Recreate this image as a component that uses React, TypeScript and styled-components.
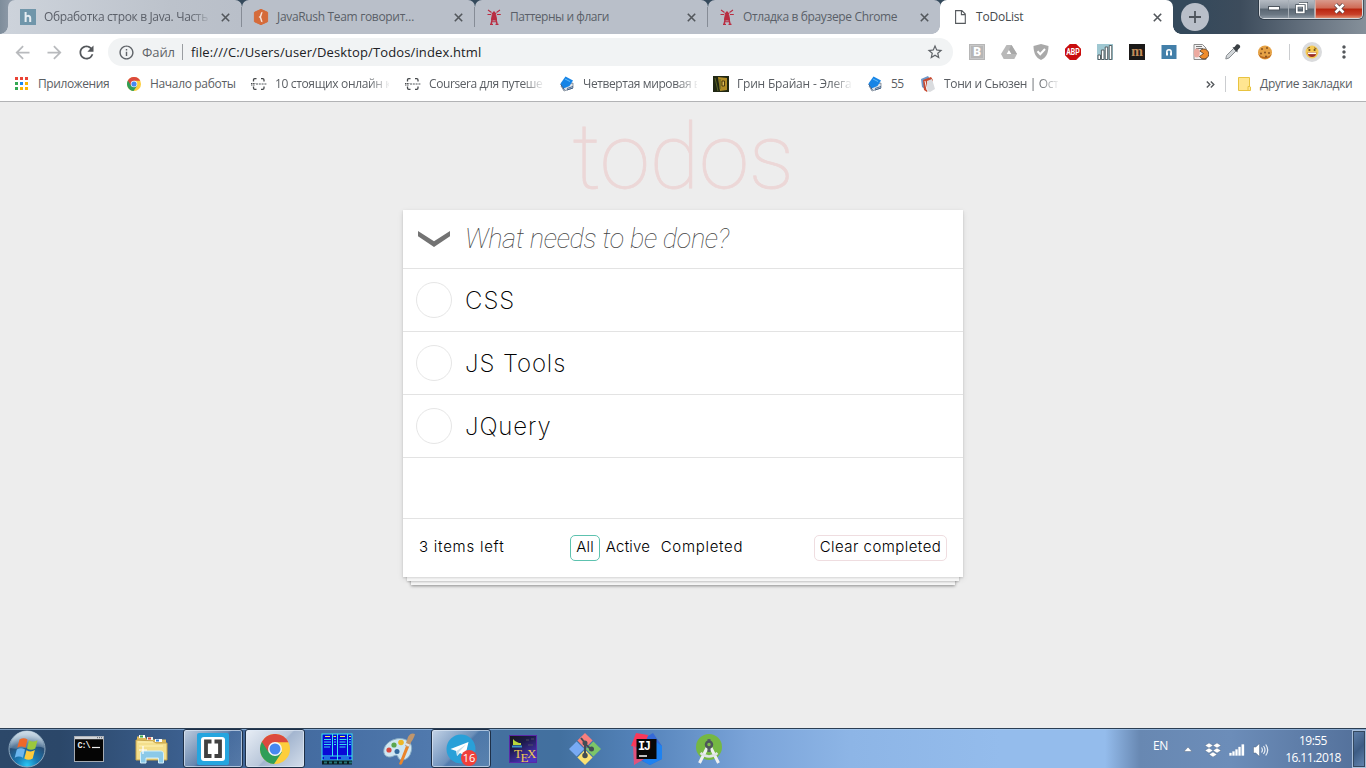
import React from 'react';
import styled, { createGlobalStyle } from 'styled-components';
import { MdArrowBack, MdArrowForward, MdRefresh, MdInfoOutline, MdStarBorder, MdMoreVert } from 'react-icons/md';

const GlobalStyle = createGlobalStyle`
  * { box-sizing: border-box; }
  body { margin: 0; overflow: hidden; font-family: 'Open Sans', 'Noto Sans', sans-serif; }
  svg { display: block; flex: none; }
`;

const Screen = styled.div`
  width: 1366px;
  height: 768px;
  display: flex;
  flex-direction: column;
  background: #ededed;
`;

/* ---------- Tab strip ---------- */

const TitleBar = styled.header`
  height: 34px;
  flex: none;
  display: flex;
  align-items: flex-start;
  padding-left: 8px;
  background: linear-gradient(90deg, #7e8d9b 0, #8e9aa8 10px, #34495b 240px, #34495b 1190px, #3d4c5c 1240px, #6c7885 1320px, #85909a 100%);
`;

const Tab = styled.div<{ $active?: boolean; $first?: boolean }>`
  position: relative;
  width: ${p => (p.$first ? 234 : 233)}px;
  height: 34px;
  display: flex;
  align-items: center;
  padding-left: ${p => (p.$first ? 12 : 11)}px;
  border-radius: 7px 7px 0 0;
  background: ${p => (p.$active ? '#fff' : p.$first ? 'linear-gradient(90deg, #cdd3db, #bcc2cb 70%, #b9bfc9)' : '#b9bfc9')};
  ${p => p.$active && 'margin-left: -1px; padding-left: 12px; z-index: 1;'}
  ${p => (p.$active || p.$first) && `
    &::before {
      content: '';
      position: absolute;
      left: -8px;
      bottom: 0;
      width: 8px;
      height: 8px;
      background: radial-gradient(circle at 0 0, transparent 7.5px, ${p.$active ? '#fff' : '#cdd3db'} 8px);
    }
  `}
  ${p => p.$active && `
    &::after {
      content: '';
      position: absolute;
      right: -8px;
      bottom: 0;
      width: 8px;
      height: 8px;
      background: radial-gradient(circle at 100% 0, transparent 7.5px, #fff 8px);
    }
  `}
`;

const TabTitle = styled.span<{ $ls?: number; $fade?: boolean; $active?: boolean }>`
  width: 177px;
  padding-left: 8px;
  margin-right: 0;
  flex: none;
  overflow: hidden;
  white-space: nowrap;
  font-size: 12px;
  line-height: 18px;
  letter-spacing: ${p => p.$ls ?? -0.2}px;
  color: ${p => (p.$active ? '#45494d' : '#5a5f68')};
  ${p => p.$fade && 'mask-image: linear-gradient(90deg, #000 154px, transparent 176px);'}
`;

const IconSlot = styled.span`
  width: 16px;
  display: grid;
  place-items: center;
`;

const CloseSlot = styled.span`
  margin-left: 8px;
`;

const TabDivider = styled.i`
  position: absolute;
  right: 0;
  top: 7px;
  width: 1px;
  height: 20px;
  background: #868c96;
`;

const NewTab = styled.div`
  width: 28px;
  height: 28px;
  margin: 3px 0 0 8px;
  border-radius: 50%;
  background: #b9bfc9;
  display: grid;
  place-items: center;
`;

const WindowButtons = styled.div`
  display: flex;
  margin-left: auto;
  margin-right: 3px;
  height: 19px;
  border: 1px solid #d5d9de;
  border-top: 0;
  border-radius: 0 0 5px 5px;
  overflow: hidden;
  box-shadow: 0 0 0 1px rgba(30, 40, 50, 0.6);
`;

const WindowButton = styled.div<{ $w: number; $close?: boolean }>`
  width: ${p => p.$w}px;
  display: grid;
  place-items: center;
  padding-bottom: 2px;
  border-left: ${p => (p.$close ? '1px solid #d9a79c' : '0')};
  border-right: ${p => (p.$close ? '0' : '1px solid #a5adb5')};
  background: ${p =>
    p.$close
      ? 'linear-gradient(#d99a8c, #cf6a55 45%, #b8250f 50%, #c8402a 80%, #e08e70)'
      : 'linear-gradient(#b5bbc3, #8f98a2 45%, #5a6672 50%, #6b7783 80%, #8c97a2)'};
`;

/* ---------- Toolbar ---------- */

const Toolbar = styled.div`
  height: 36px;
  flex: none;
  display: flex;
  align-items: center;
  background: #fff;
  padding-left: 6px;
`;

const NavButton = styled.div<{ $muted?: boolean }>`
  width: 32px;
  display: grid;
  place-items: center;
  color: ${p => (p.$muted ? '#b8babd' : '#54575b')};
`;

const MenuButton = styled.div`
  width: 20px;
  margin-left: 12px;
  color: #54575b;
`;

const Omnibox = styled.div`
  width: 845px;
  height: 28px;
  margin-left: 6px;
  border-radius: 14px;
  background: #f1f3f4;
  display: flex;
  align-items: center;
  padding: 0 9px 0 10px;
  color: #5f6368;
`;

const Scheme = styled.span`
  margin-left: 7px;
  width: 40px;
  font-size: 13px;
  letter-spacing: -0.1px;
`;

const Url = styled.span`
  flex: 1;
  padding-left: 8px;
  border-left: 1px solid #9a9da1;
  font-size: 13px;
  line-height: 16px;
  letter-spacing: 0.13px;
  color: #202124;
  white-space: nowrap;
`;

const Extensions = styled.div`
  display: flex;
  margin-left: 8px;
`;

const ExtensionSlot = styled.div`
  width: 32px;
  height: 28px;
  display: grid;
  place-items: center;
`;

const Separator = styled.i<{ $h: number; $ml?: number; $mr?: number }>`
  width: 1px;
  height: ${p => p.$h}px;
  margin-left: ${p => p.$ml ?? 0}px;
  margin-right: ${p => p.$mr ?? 0}px;
  background: #cbcdd0;
`;

const Avatar = styled.div`
  width: 20px;
  height: 20px;
  border-radius: 50%;
  background: #dadbdd;
  display: grid;
  place-items: center;
`;

/* ---------- Bookmarks ---------- */

const BookmarkBar = styled.nav`
  height: 32px;
  flex: none;
  display: flex;
  align-items: center;
  padding: 0 14px 3px 14px;
  background: #fff;
  border-bottom: 1px solid #b2b3b5;
  color: #5a5e63;
`;

const Bookmark = styled.div<{ $w: number }>`
  width: ${p => p.$w}px;
  flex: none;
  display: flex;
  align-items: center;
  gap: 8px;
`;

const BookmarkText = styled.span<{ $ls?: number; $fade?: boolean }>`
  max-width: 114px;
  overflow: hidden;
  white-space: nowrap;
  font-size: 12px;
  line-height: 18px;
  letter-spacing: ${p => p.$ls ?? -0.2}px;
  ${p => p.$fade && 'mask-image: linear-gradient(90deg, #000 94px, transparent 116px);'}
`;

const More = styled.div`
  margin-left: auto;
  margin-right: 10px;
`;

const OtherText = styled.span`
  margin-left: 9px;
  width: 92px;
  white-space: nowrap;
  font-size: 12px;
  line-height: 18px;
  letter-spacing: -0.32px;
`;

/* ---------- Todo page ---------- */

const Page = styled.main`
  flex: 1;
  display: flex;
  flex-direction: column;
  align-items: center;
  background: #ededed;
`;

const Title = styled.h1`
  height: 108px;
  margin: 0;
  padding-top: 3px;
  font: 100 91px/104px Roboto, sans-serif;
  letter-spacing: -0.3px;
  color: #ecd7d7;
  -webkit-text-stroke: 0.8px #ecd7d7;
  white-space: nowrap;
`;

const Card = styled.section`
  width: 560px;
  height: 367px;
  background: #fff;
  box-shadow: 0 1px 2px rgba(0, 0, 0, 0.14), 0 8px 0 -4px #f6f6f6, 0 9px 2px -4px rgba(0, 0, 0, 0.22),
    0 16px 0 -8px #f6f6f6, 0 17px 3px -8px rgba(0, 0, 0, 0.42), 0 2px 6px rgba(0, 0, 0, 0.1);
`;

const Entry = styled.div`
  height: 59px;
  display: flex;
  align-items: center;
  padding-left: 15px;
  border-bottom: 1px solid #e3e3e3;
`;

const Placeholder = styled.span`
  margin-left: 15px;
  font: italic 100 27px/40px Roboto, sans-serif;
  letter-spacing: -0.35px;
  color: #444;
  white-space: nowrap;
`;

const Item = styled.div`
  height: 63px;
  display: flex;
  align-items: center;
  padding-left: 13px;
  border-bottom: 1px solid #e3e3e3;
`;

const Check = styled.span`
  width: 36px;
  height: 36px;
  border: 1px solid #e6e6e6;
  border-radius: 50%;
`;

const Label = styled.span<{ $ls: number }>`
  margin-left: 13px;
  padding-top: 2px;
  font: 200 24px/36px Inter, sans-serif;
  letter-spacing: ${p => p.$ls}px;
  color: #000;
`;

const Blank = styled.div`
  height: 61px;
  border-bottom: 1px solid #e3e3e3;
`;

const Footer = styled.footer`
  height: 58px;
  display: flex;
  align-items: center;
  padding: 0 16px;
  font: 300 15px/22px Inter, sans-serif;
  color: #000;
`;

const Count = styled.span`
  width: 151px;
  padding-bottom: 2px;
  letter-spacing: 0.75px;
`;

const Filter = styled.span<{ $w: number; $selected?: boolean; $ls?: number }>`
  width: ${p => p.$w}px;
  height: 26px;
  flex: none;
  text-align: center;
  border: 1px solid ${p => (p.$selected ? '#5dc2af' : 'transparent')};
  border-radius: 5px;
  letter-spacing: ${p => p.$ls ?? 0.2}px;
  white-space: nowrap;
`;

const ClearButton = styled.span`
  width: 133px;
  height: 26px;
  margin-left: auto;
  flex: none;
  text-align: center;
  border: 1px solid #efdde0;
  border-radius: 5px;
  letter-spacing: 0.45px;
  white-space: nowrap;
`;

/* ---------- Taskbar ---------- */

const Taskbar = styled.div`
  height: 40px;
  flex: none;
  display: flex;
  align-items: center;
  border-top: 1px solid #2b3e53;
  box-shadow: inset 0 1px 0 rgba(170, 205, 240, 0.6);
  background: linear-gradient(90deg, #2c4869 0, #2b4769 60px, #3d6191 190px, #456da2 320px, #5079ad 430px, #44709f 500px, #42709f 560px, #5483ba 640px, #7ba4d9 750px, #8db5e6 850px, #94bcec 1000px, #94bcec 1105px, #6888b2 1140px, #6c8db9 1230px, #526f99 1366px);
`;

const Start = styled.div`
  width: 58px;
  padding-left: 8px;
`;

const Task = styled.div<{ $state?: 'open' | 'active' }>`
  width: 60px;
  height: 39px;
  margin: 0 1px;
  display: grid;
  place-items: center;
  position: relative;
  ${p => p.$state && `
    border: 1px solid #1e3048;
    border-radius: 3px;
    box-shadow: inset 0 0 0 1px rgba(225, 235, 247, 0.65);
    background: ${p.$state === 'active'
      ? 'linear-gradient(135deg, #e8eef6, #b9c7da 50%, #a3b5cf 52%, #d4deeb)'
      : 'linear-gradient(135deg, rgba(235,242,250,.75), rgba(160,185,215,.4) 48%, rgba(100,140,190,.2) 52%, rgba(150,180,215,.25))'};
  `}
`;

const UnreadBadge = styled.span`
  position: absolute;
  left: 29px;
  top: 20px;
  width: 16px;
  height: 16px;
  border-radius: 8px;
  background: #f0403b;
  color: #fff;
  font: 400 11px/16px 'Open Sans', sans-serif;
  text-align: center;
`;

const Tray = styled.div`
  margin-left: auto;
  display: flex;
  align-items: center;
  height: 39px;
  color: #fff;
`;

const Language = styled.span`
  width: 31px;
  font-size: 12px;
  line-height: 18px;
  padding-bottom: 5px;
  letter-spacing: -0.3px;
`;

const TrayIcons = styled.div`
  display: flex;
  align-items: center;
  gap: 8px;
  padding-top: 2px;
  & > svg:first-child { margin-right: 5px; }
`;

const Clock = styled.div`
  width: 62px;
  margin-left: 13px;
  margin-right: 8px;
  font-size: 12px;
  line-height: 17px;
  letter-spacing: -0.55px;
  text-align: center;
`;

const ShowDesktop = styled.div`
  width: 14px;
  height: 38px;
  border: 1px solid #a9c0dc;
  outline: 1px solid #33485f;
  outline-offset: -2px;
  background: linear-gradient(135deg, #5f7fa9, #3d5c84 50%, #6587b1);
`;

/* ---------- Drawings ---------- */

const Cross = () => (
  <svg width="9" height="9" viewBox="0 0 9 9"><path d="M.8.8l7.4 7.4M8.2.8L.8 8.2" stroke="#53575c" strokeWidth="1.6" /></svg>
);

const HexletMark = () => (
  <svg width="16" height="16" viewBox="0 0 16 16"><rect width="16" height="16" fill="#7096aa" /><path d="M5.6 3v10M5.6 8.8c0-2.400 4.600-2.800 4.600.2v4" fill="none" stroke="#e6edf2" strokeWidth="2" /></svg>
);

const RushMark = () => (
  <svg width="16" height="16" viewBox="0 0 16 16"><path d="M8 .3l6.600 3v9.400L8 15.700l-6.600-3V3.300z" fill="#d56b3a" stroke="#d56b3a" strokeLinejoin="round" /><path d="M9.400 3.500C7.600 3.600 8.800 6.900 7 8c1.800 1.100.6 4.400 2.400 4.500" fill="none" stroke="#f6e4db" strokeWidth="1.500" /></svg>
);

const TowerMark = () => (
  <svg width="16" height="16" viewBox="0 0 16 16" fill="none" stroke="#b92d42">
    <path d="M7 6.5L5 15.5M9 6.5l2.2 9M4 15.5h3M9.5 15.5h3" strokeWidth="1.400" />
    <path d="M6.3 5.5h3.400l.8 5.500h-5z" fill="#b92d42" />
    <path d="M6.5 4.5h3L8 2.8zM5.700 12.700h4.800M2 1l3.500 2.500M1.500 5.500h3.700M14 1l-3.500 2.500M14.800 5.500H11" strokeWidth="1.100" />
  </svg>
);

const PageMark = () => (
  <svg width="11" height="14" viewBox="0 0 11 14"><path d="M.6.6h6.200l3.500 3.500v9.300H.6zM6.400.8v3.800h3.800" fill="#fff" stroke="#55595d" strokeWidth="1.100" /></svg>
);

const ChromeMark = ({ size }: { size: number }) => (
  <svg width={size} height={size} viewBox="0 0 30 30">
    <circle cx="15" cy="15" r="15" fill="#fdce3d" />
    <path d="M15 15L1.900 7.700A15 15 0 0 0 14 30l8-12z" fill="#2f9e58" />
    <path d="M1.900 7.700A15 15 0 0 1 28.400 8.200H15L8.500 18z" fill="#dc4a3d" />
    <circle cx="15" cy="15" r="7" fill="#f4f6f8" />
    <circle cx="15" cy="15" r="5.500" fill="#4688f1" />
  </svg>
);

const appDots = ['#ea4335', '#ea4335', '#ea4335', '#34a853', '#1a88f0', '#fbb400', '#34a853', '#fbb400', '#fbb400'];

const AppsMark = () => (
  <svg width="16" height="16" viewBox="0 0 16 16">
    {appDots.map((c, i) => (
      <rect key={i} x={1 + (i % 3) * 5} y={1 + Math.floor(i / 3) * 5} width="3" height="3" fill={c} />
    ))}
  </svg>
);

const BracketMark = () => (
  <svg width="16" height="16" viewBox="0 0 16 16" fill="none" stroke="#45484b">
    <path d="M5.500 2.700H3.800q-1.300 0-1.300 1.300v1.500M2.500 10.500V12q0 1.300 1.300 1.300h1.700M10 2.700h1.700q1.300 0 1.300 1.300v1.500M13 10.500V12q0 1.300-1.300 1.300H10" strokeWidth="1.300" />
    <path d="M0 7.500h4.500M0 9h4" strokeWidth="1.100" strokeDasharray="1.500 .6" /><path d="M5 8h11" stroke="#8b8e91" strokeWidth="1.300" strokeDasharray="2 .8" />
  </svg>
);

const BookMark = () => (
  <svg width="16" height="16" viewBox="0 0 16 16">
    <path d="M2 10l3 5 9-3V7z" fill="#dfe3e8" stroke="#657484" strokeWidth=".7" />
    <path d="M1.500 7.500L6.500.5 14 4.500 10.500 10 4.500 12.500z" fill="#1684e6" /><path d="M1.500 8l4 6M8 12.500l6-2M8 14l6-2" stroke="#254c7e" strokeWidth=".8" />
    <path d="M6 3l5 2.500" stroke="#61bbfa" />
  </svg>
);

const OldBookMark = () => (
  <svg width="16" height="16" viewBox="0 0 16 16"><rect width="16" height="16" fill="#202713" /><path d="M5 1l9 1v12l-7 1z" fill="#b08c26" /><path d="M2 2l3 13M7 3v10" stroke="#596225" /><path d="M9 5h2.500v5H9z" fill="#ddbd57" stroke="#4b3a10" /></svg>
);

const ShelfMark = () => (
  <svg width="16" height="16" viewBox="0 0 16 16"><path d="M1 3l7-3 2 3-4 11-4-3z" fill="#6e98c8" /><path d="M3 4l8-3 2 3-6 12-3-2z" fill="#c8492f" /><path d="M7 5l5-2 3 10-5 3-3-1z" fill="#dadcdf" /><path d="M5 5l2 9" stroke="#f6f6f6" /></svg>
);

const Extension = ({ kind }: { kind: number }) => {
  const body = [
    <g key="0"><rect width="16" height="16" fill="#b6b6b6" /><rect x="1.500" y="1.500" width="13" height="13" fill="none" stroke="#c8c8c8" /><text x="8" y="12.300" textAnchor="middle" fontFamily="Roboto" fontSize="12" fontWeight="900" fill="#fff">B</text></g>,
    <g key="1"><path d="M5.500 1h5L16 10l-2.700 5H2.700L0 10z" fill="#b9b9b9" /><path d="M8 6l2.400 4H5.600z" fill="#fff" /><path d="M10.500 1L16 10h-5.400L8 5.800z" fill="#a8a8a8" /></g>,
    <g key="2"><path d="M8 0l7.500 2C15.500 9 13 14 8 16 3 14 .5 9 .5 2z" fill="#a9a9a9" /><path d="M4.500 7.300l2.700 2.900L12 5" fill="none" stroke="#fff" strokeWidth="2" /></g>,
    <g key="3"><path d="M4.800 0h6.400L16 4.800v6.400L11.200 16H4.800L0 11.200V4.800z" fill="#c90d0d" /><text x="1.200" y="11" textLength="13.600" lengthAdjust="spacingAndGlyphs" fontFamily="Roboto" fontSize="8.500" fontWeight="700" fill="#fff">ABP</text></g>,
    <g key="4"><rect width="16" height="16" fill="#9fc8d2" /><path d="M1 11h2.500v4.500H1zM4.400 6H7v9.500H4.400zM8.200 3h2.500v12.500H8.200zM12.200 1.500h2.600v14h-2.600z" fill="#fff" stroke="#555e63" strokeWidth="1" /></g>,
    <g key="5"><rect width="16" height="16" fill="#1b1918" /><text x="8" y="12" textAnchor="middle" fontFamily="Liberation Serif" fontSize="14" fontWeight="700" fill="#c18b59">m</text></g>,
    <g key="6"><rect x=".5" y="1" width="15" height="14" fill="#427fa9" /><path d="M5.800 9.500V8a2.200 2.300 0 0 1 4.400 0v1.500" fill="none" stroke="#fff" strokeWidth="1.500" /><path d="M5 8.500h2v3H5zM9 8.500h2v3H9z" fill="#fff" /></g>,
    <g key="7"><path d="M1 .5h8.500L13 4v11.500H1z" fill="#f2f2f2" stroke="#8b8b8b" /><path d="M3 2.500h6M3 4.500h7" stroke="#777" /><ellipse cx="3.800" cy="9" rx="3" ry="4.500" fill="#ecaaa0" /><path d="M10.500 9.500L6.800 7a5 5 0 1 1-.3 5.500z" fill="#ee8c2d" stroke="#4a3321" strokeWidth=".8" /></g>,
    <g key="8"><path d="M.8 15l.7-3.500 7-7 2.500 2.500-7 7z" fill="#d2d6d9" stroke="#888d91" /><path d="M7.500 3.500l2-.5 2-2.400c1.500-1.500 4.500 1 3.500 2.900L12.700 6l-.4 2.500z" fill="#3b4045" /></g>,
    <g key="9"><circle cx="8" cy="8.500" r="7" fill="#e6a245" /><path d="M1.400 10a7 7 0 0 0 13.200 0c-3 4-10 4-13.200 0z" fill="#b8671e" />{[[5, 5], [10, 4], [8, 8.500], [12, 9], [4, 9.500], [9, 12.500]].map(([x, y]) => <circle key={`${x}-${y}`} cx={x} cy={y} r="1" fill="#86501f" />)}</g>,
  ];
  return <svg width="16" height="16" viewBox="0 0 16 16">{body[kind]}</svg>;
};

const Face = () => (
  <svg width="14" height="14" viewBox="0 0 14 14"><circle cx="7" cy="7" r="6.500" fill="#f5ca55" /><path d="M2.500 7.500h9c0 6-9 6-9 0z" fill="#9b2f2a" /><path d="M3 7.600h8v1.500H3z" fill="#fff" /><path d="M2.500 3.300l2.400-1M9 2.800l2.500 1" stroke="#8a6420" /><circle cx="4.400" cy="5" r="1.100" fill="#6a4a1d" /><circle cx="9.600" cy="5" r="1.100" fill="#6a4a1d" /></svg>
);

const StartOrb = () => (
  <svg width="38" height="38" viewBox="0 0 38 38">
    <defs>
      <radialGradient id="orb" cx=".5" cy=".95" r=".85"><stop offset="0" stopColor="#29c7f5" /><stop offset=".35" stopColor="#1979b2" /><stop offset=".75" stopColor="#284e76" /><stop offset="1" stopColor="#8ea7bd" /></radialGradient>
      <linearGradient id="gloss" x2="0" y2="1"><stop offset="0" stopColor="#e0ebf3" stopOpacity=".8" /><stop offset="1" stopColor="#bdd3e3" stopOpacity=".25" /></linearGradient>
    </defs>
    <circle cx="19" cy="19" r="18" fill="url(#orb)" stroke="#8fa9be" />
    <path d="M2 18a17 17 0 0 1 34 0c-8-4-24 3-34 0z" fill="url(#gloss)" />
    <path d="M11.500 9.500c3-1.800 5.500-1.700 8 0l-2 8.300c-3-1.800-5.700-1.500-8.300 0z" fill="#ee6829" />
    <path d="M21 10.300c2.700 1.700 5.500 1.600 8.500-.1l-2.200 8.400c-3 1.700-5.800 1.500-8.300 0z" fill="#9bc83d" />
    <path d="M8.800 19.500c2.800-1.700 5.500-1.700 8.200 0l-2.100 8.200c-2.700-1.800-5.600-1.500-8.200 0z" fill="#6bb6ee" />
    <path d="M18.500 20.200c2.900 1.600 5.700 1.600 8.400-.1l-2.200 8.400c-2.800 1.700-5.600 1.600-8.400 0z" fill="#fccb3c" />
  </svg>
);

const Terminal = () => (
  <svg width="30" height="26" viewBox="0 0 30 26"><rect x=".5" y=".5" width="29" height="25" fill="#050505" stroke="#a6abb2" /><path d="M1 2h28" stroke="#d3d6da" strokeWidth="2.500" /><path d="M23 1.700h5" stroke="#57616c" strokeDasharray="1 1" /><text x="3.500" y="12" fontFamily="Liberation Mono" fontSize="8.500" fontWeight="700" fill="#eee" textLength="13">C:\</text><path d="M18 11.500h8" stroke="#eee" strokeWidth="1.200" /></svg>
);

const Explorer = () => (
  <svg width="33" height="32" viewBox="0 0 33 32">
    <path d="M2 3.500h8l2 3h19v19H2z" fill="#ddba58" /><path d="M4 2h6v3H4z" fill="#fff" /><path d="M5 2.500h3v2H5z" fill="#3ba747" /><path d="M12 4h6v3h-6z" fill="#f5f4e4" /><path d="M13 4.500h3v2h-3z" fill="#d74a39" /><path d="M20 6h7v3h-7z" fill="#fff" /><path d="M21 6.500h3v2h-3z" fill="#3182d7" />
    <path d="M1 7l17 1 3 2h11v17H1z" fill="#f4df8c" stroke="#c7a44b" /><path d="M3 9h15M4 13h24" stroke="#fff3b5" />
    <path d="M5.500 30V21c0-2 1-3 3-3h17c2 0 3 1 3 3v9h-5v-5H11v5z" fill="#8bc9e8" stroke="#d3effa" />
    <path d="M8 13v8M4 17h8" stroke="#fff" strokeWidth="1.200" />
  </svg>
);

const Brackets = () => (
  <svg width="32" height="32" viewBox="0 0 32 32"><rect width="32" height="32" rx="2" fill="#25a5df" /><rect x="4" y="4" width="24" height="24" rx="3" fill="#fff" /><path d="M14.500 8.500H9v14.500h5.500M17.500 8.500H23V23h-5.500" fill="none" stroke="#414141" strokeWidth="3.800" /></svg>
);

const FileManager = () => (
  <svg width="32" height="32" viewBox="0 0 32 32"><rect x="1" y="1" width="30" height="26" fill="#0909d6" stroke="#38e6ef" /><path d="M11.500 1v22M16.500 1v26M26.500 1v22M1 23h30" stroke="#38e6ef" />
    <path d="M3 6.500h7M3 9h7M3 11.500h7M3 14h6M13 6.500h2M13 9h2M13 11.500h2M18.500 6.500h7M18.500 9h6M18.500 11.500h7M18.500 14h6M28 6.500h2M28 9h2M28 11.500h2M3 25h6M20 25h8" stroke="#38d8f2" />
    <path d="M4 3.500h5M12.500 3.500h2.500M19 3.500h5M28 3.500h2" stroke="#f0eb59" /><path d="M1 27.500h30v4H1z" fill="#071c1e" /><path d="M3 29.500h28" stroke="#23757a" strokeWidth="2" strokeDasharray="3 2" /></svg>
);

const Paint = () => (
  <svg width="32" height="32" viewBox="0 0 32 32"><path d="M13 6C23 4 31 10 28 19c-2 9-12 10-13 5-1-4-5 0-8 0C-3 24-1 9 13 6z" fill="#cfe7f3" stroke="#88abc3" />
    <circle cx="11" cy="12" r="2.600" fill="#5ba64e" /><circle cx="18" cy="9.500" r="2.800" fill="#edb727" /><circle cx="6" cy="17" r="2.600" fill="#d54941" /><circle cx="14" cy="18.500" r="2.500" fill="#33699d" />
    <path d="M16 31l7-18 3 1-7 17c-1 1-2 1-3 0z" fill="#e9852c" /><path d="M22 13l3-9c2-4 5-4 7-3-1 5-4 7-6 13z" fill="#bf966d" /><path d="M22.500 11l4 1.500" stroke="#e6e6e6" strokeWidth="2" /></svg>
);

const Telegram = () => (
  <svg width="30" height="30" viewBox="0 0 30 30"><circle cx="15" cy="15" r="14.500" fill="#29a0d8" /><path d="M4.500 15L22.500 8l-3.300 14-5.200-3-3 3-.8-5z" fill="#fff" /><path d="M10.500 17l9.500-6.500-7 7.500-1.500 4z" fill="#c3ddea" /></svg>
);

const Tex = () => (
  <svg width="28" height="28" viewBox="0 0 28 28"><defs><linearGradient id="tex" x2=".6" y2="1"><stop stopColor="#171717" /><stop offset=".4" stopColor="#1d1a4b" /><stop offset="1" stopColor="#4c36bd" /></linearGradient></defs><rect x=".5" y=".5" width="27" height="27" fill="url(#tex)" stroke="#5a28a8" /><path d="M4 4l2 2 4 2h2v2H4z" fill="#b9d83a" /><path d="M3 11.500h10" stroke="#3b92c8" strokeWidth="2" /><path d="M17 5h3M19 10h5M22 4h3" stroke="#555b66" strokeWidth=".8" /><g fontFamily="Liberation Serif" fontSize="13" fill="#efcb4f"><text x="5" y="23">T</text><text x="11.500" y="26.500">E</text><text x="18" y="23">X</text></g></svg>
);

const Git = () => (
  <svg width="32" height="32" viewBox="0 0 32 32"><path d="M16 0l7.600 7.600-7.600 7.600-7.600-7.600z" fill="#f97f7d" /><path d="M24.400 8.400L32 16l-7.600 7.600-7.600-7.600z" fill="#7cc668" /><path d="M16 16.800l7.600 7.600L16 32l-7.600-7.600z" fill="#fbe173" /><path d="M7.600 8.400l7.600 7.600-7.600 7.600L0 16z" fill="#78aaf4" /><path d="M12 5l4 5v14M16 11l7 6" stroke="#424c55" strokeWidth="2" fill="none" /><circle cx="16" cy="10" r="2.500" fill="#424c55" /><circle cx="22.500" cy="16" r="2.500" fill="#424c55" /><circle cx="16" cy="22.500" r="2.700" fill="#424c55" /></svg>
);

const Idea = () => (
  <svg width="32" height="32" viewBox="0 0 32 32"><path d="M5 0l12 2-2 14L0 13z" fill="#f93859" /><path d="M17 3l5-3 9 13v13l-12 6-12-6z" fill="#3569d7" /><path d="M2 12l13 13-12 7z" fill="#e0527c" /><path d="M22 7l9 6v13l-12 6-7-4z" fill="#1e82f0" /><rect x="5.500" y="6" width="20" height="20" fill="#080808" /><text x="7" y="17" fontFamily="Liberation Mono" fontWeight="700" fontSize="12" fill="#fff" textLength="13">IJ</text><path d="M8 23h8" stroke="#fff" strokeWidth="1.500" /></svg>
);

const AndroidStudio = () => (
  <svg width="28" height="32" viewBox="0 0 28 32"><circle cx="14" cy="14" r="13" fill="#75b843" /><path d="M13 13L4.500 30M15 13l8.500 17" stroke="#eef0f1" strokeWidth="3" /><path d="M5.500 20c5 4.500 12 4.500 17 0" fill="none" stroke="#dfe3e5" strokeWidth="2.500" /><path d="M14 6v13" stroke="#586066" strokeWidth="3" /><circle cx="14" cy="11.500" r="3" fill="#7fbd4d" stroke="#4d565b" strokeWidth="2.500" /></svg>
);

/* ---------- Content ---------- */

const tabs = [
  { title: 'Обработка строк в Java. Часть', icon: <HexletMark />, fade: true, ls: -0.35 },
  { title: 'JavaRush Team говорит…', icon: <RushMark />, ls: -0.33 },
  { title: 'Паттерны и флаги', icon: <TowerMark />, ls: -0.47 },
  { title: 'Отладка в браузере Chrome', icon: <TowerMark />, ls: -0.36 },
];

const bookmarks = [
  { text: 'Приложения', icon: <AppsMark />, w: 112, ls: -0.4 },
  { text: 'Начало работы', icon: <ChromeMark size={14} />, w: 125, ls: -0.33 },
  { text: '10 стоящих онлайн к', icon: <BracketMark />, w: 154, fade: true, ls: -0.35 },
  { text: 'Coursera для путешес', icon: <BracketMark />, w: 154, fade: true, ls: -0.4 },
  { text: 'Четвертая мировая в', icon: <BookMark />, w: 154, fade: true, ls: -0.4 },
  { text: 'Грин Брайан - Элеган', icon: <OldBookMark />, w: 154, fade: true },
  { text: '55', icon: <BookMark />, w: 53, ls: -0.5 },
  { text: 'Тони и Сьюзен | Осте', icon: <ShelfMark />, w: 154, fade: true, ls: -0.35 },
];

const todos = [
  { text: 'CSS', ls: 1 },
  { text: 'JS Tools', ls: 0.9 },
  { text: 'JQuery', ls: 0.9 },
];

export default function App() {
  return (
    <Screen>
      <GlobalStyle />
      <TitleBar>
        {tabs.map((t, i) => (
          <Tab key={t.title} $first={i === 0}>
            <IconSlot>{t.icon}</IconSlot>
            <TabTitle $fade={t.fade} $ls={t.ls}>{t.title}</TabTitle>
            <CloseSlot><Cross /></CloseSlot>
            {i < 3 && <TabDivider />}
          </Tab>
        ))}
        <Tab $active>
          <IconSlot><PageMark /></IconSlot>
          <TabTitle $active>ToDoList</TabTitle>
          <CloseSlot><Cross /></CloseSlot>
        </Tab>
        <NewTab>
          <svg width="12" height="12" viewBox="0 0 12 12"><path d="M6 0v12M0 6h12" stroke="#4e545b" strokeWidth="1.800" /></svg>
        </NewTab>
        <WindowButtons>
          <WindowButton $w={29}><svg width="12" height="5" viewBox="0 0 12 5"><rect x=".5" y=".5" width="11" height="3.500" fill="#fff" stroke="#4d555e" /></svg></WindowButton>
          <WindowButton $w={26}><svg width="13" height="12" viewBox="0 0 13 12"><path d="M4 1.500h7.500V8M1.800 3.800h7v6.500h-7z" fill="none" stroke="#46505a" strokeWidth="3" /><path d="M4 1.500h7.500V8M1.800 3.800h7v6.500h-7z" fill="none" stroke="#fff" strokeWidth="1.700" /></svg></WindowButton>
          <WindowButton $w={47} $close><svg width="13" height="11" viewBox="0 0 13 11"><path d="M2.500 1.500l8 8M10.500 1.500l-8 8" stroke="#553f43" strokeWidth="4" /><path d="M2.500 1.500l8 8M10.500 1.500l-8 8" stroke="#fff" strokeWidth="2.500" /></svg></WindowButton>
        </WindowButtons>
      </TitleBar>

      <Toolbar>
        <NavButton $muted><MdArrowBack size={21} /></NavButton>
        <NavButton $muted><MdArrowForward size={21} /></NavButton>
        <NavButton><MdRefresh size={21} /></NavButton>
        <Omnibox>
          <MdInfoOutline size={17} />
          <Scheme>Файл</Scheme>
          <Url>file:///C:/Users/user/Desktop/Todos/index.html</Url>
          <MdStarBorder size={18} />
        </Omnibox>
        <Extensions>
          {Array.from({ length: 10 }, (_, i) => <ExtensionSlot key={i}><Extension kind={i} /></ExtensionSlot>)}
        </Extensions>
        <Separator $h={16} $ml={8} $mr={12} />
        <Avatar><Face /></Avatar>
        <MenuButton><MdMoreVert size={20} /></MenuButton>
      </Toolbar>

      <BookmarkBar>
        {bookmarks.map(b => (
          <Bookmark key={b.text} $w={b.w}>
            <IconSlot>{b.icon}</IconSlot>
            <BookmarkText $fade={b.fade} $ls={b.ls}>{b.text}</BookmarkText>
          </Bookmark>
        ))}
        <More><svg width="9" height="7" viewBox="0 0 9 7"><path d="M.8.6l3 2.900-3 2.900M4.800.6l3 2.900-3 2.900" fill="none" stroke="#55595d" strokeWidth="1.400" /></svg></More>
        <Separator $h={16} $mr={12} />
        <svg width="13" height="14" viewBox="0 0 13 14"><path d="M.5.5h11v9l1 .5v3.500H.5z" fill="#ffe591" stroke="#e8c340" /><path d="M10 13v-3.500h2" fill="none" stroke="#e8c340" /></svg>
        <OtherText>Другие закладки</OtherText>
      </BookmarkBar>

      <Page>
        <Title>todos</Title>
        <Card>
          <Entry>
            <svg width="32" height="16" viewBox="0 0 32 16"><path d="M0 0l16 10.300L32 0v5.300L16 16 0 5.300z" fill="#737373" /></svg>
            <Placeholder>What needs to be done?</Placeholder>
          </Entry>
          {todos.map(t => (
            <Item key={t.text}><Check /><Label $ls={t.ls}>{t.text}</Label></Item>
          ))}
          <Blank />
          <Footer>
            <Count>3 items left</Count>
            <Filter $w={30} $selected>All</Filter>
            <Filter $w={56}>Active</Filter>
            <Filter $w={92} $ls={0.7}>Completed</Filter>
            <ClearButton>Clear completed</ClearButton>
          </Footer>
        </Card>
      </Page>

      <Taskbar>
        <Start><StartOrb /></Start>
        <Task><Terminal /></Task>
        <Task><Explorer /></Task>
        <Task $state="open"><Brackets /></Task>
        <Task $state="active"><ChromeMark size={30} /></Task>
        <Task><FileManager /></Task>
        <Task><Paint /></Task>
        <Task $state="open"><Telegram /><UnreadBadge>16</UnreadBadge></Task>
        <Task><Tex /></Task>
        <Task><Git /></Task>
        <Task><Idea /></Task>
        <Task><AndroidStudio /></Task>
        <Tray>
          <Language>EN</Language>
          <TrayIcons>
            <svg width="8" height="5" viewBox="0 0 8 5"><path d="M4 0l4 4.500H0z" fill="#fff" stroke="#43566e" strokeWidth=".4" /></svg>
            <svg width="16" height="14" viewBox="0 0 16 14"><path d="M4 0l4 2.500L4 5 0 2.500zM12 0l4 2.500L12 5 8 2.500zM4 5l4 2.500L4 10 0 7.500zM12 5l4 2.500-4 2.500-4-2.500zM8 9l4 2.500-4 2.500-4-2.500z" fill="#fff" stroke="#3d5069" strokeWidth=".3" /></svg>
            <svg width="16" height="12" viewBox="0 0 16 12"><path d="M.5 9h2v2.500h-2zM3.500 7.500h2v4h-2zM6.500 5.500h2v6h-2zM9.500 3h2v8.500h-2zM12.700.5h2.300v11h-2.300z" fill="#fff" stroke="#fff" strokeWidth=".3" /></svg>
            <svg width="16" height="14" viewBox="0 0 16 14"><path d="M.5 4h2.300L6.500.5v13L2.800 10H.5z" fill="#fff" stroke="#40536c" strokeWidth=".4" /><path d="M8.500 4.500q1.800 2.500 0 5M10.500 3q3 4 0 8M12.700 1.500q4 5.500 0 11" fill="none" stroke="#e8eef5" strokeWidth="1.200" /></svg>
          </TrayIcons>
          <Clock>19:55<br />16.11.2018</Clock>
          <ShowDesktop />
        </Tray>
      </Taskbar>
    </Screen>
  );
}
